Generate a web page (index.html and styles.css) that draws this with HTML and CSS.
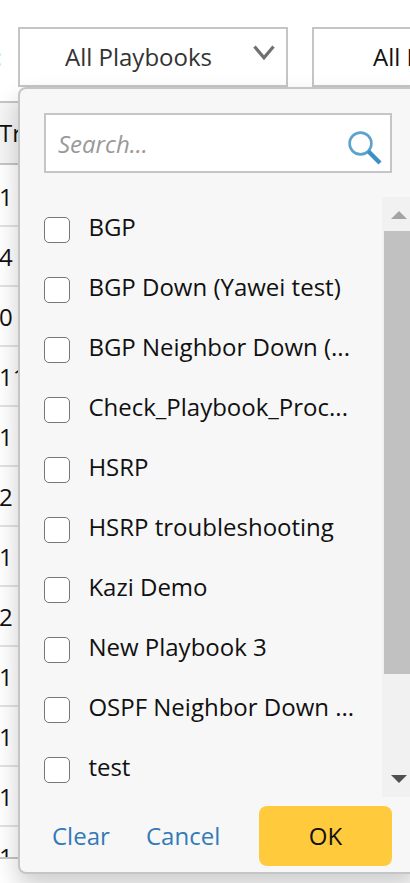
FILE: index.html
```html
<!DOCTYPE html>
<html lang="en">
<head>
<meta charset="utf-8">
<title>Playbooks</title>
<link rel="stylesheet" href="styles.css">
</head>
<body>
<div class="page">
  <header class="filters">
    <span class="label">:</span>
    <div class="select active"><span>All Playbooks</span>
      <svg class="chevron" width="22" height="18" viewBox="0 0 22 18"><path d="M1.5 1.5 11 12.8 20.5 1.5" fill="none" stroke="#707070" stroke-width="3.2"/></svg>
    </div>
    <div class="select next"><span>All Devices</span></div>
  </header>
  <main class="table">
    <div class="head">Tr</div>
    <div class="row first">1</div>
    <div class="row">4</div>
    <div class="row">0</div>
    <div class="row">11</div>
    <div class="row">1</div>
    <div class="row">2</div>
    <div class="row">1</div>
    <div class="row">2</div>
    <div class="row">1</div>
    <div class="row">1</div>
    <div class="row">1</div>
    <div class="row">1</div>
  </main>
  <section class="panel">
    <div class="search"><span>Search...</span>
      <svg width="34" height="34" viewBox="0 0 34 34"><circle cx="12.5" cy="12.5" r="10.9" fill="none" stroke="#5ba2cc" stroke-width="2.6"/><path d="M20.3 20.3 32 32" stroke="#3c90c3" stroke-width="4.4"/></svg>
    </div>
    <div class="list">
      <div class="options">
        <label class="option"><i class="box"></i><span>BGP</span></label>
        <label class="option"><i class="box"></i><span>BGP Down (Yawei test)</span></label>
        <label class="option"><i class="box"></i><span>BGP Neighbor Down (...</span></label>
        <label class="option"><i class="box"></i><span>Check_Playbook_Proc...</span></label>
        <label class="option"><i class="box"></i><span>HSRP</span></label>
        <label class="option"><i class="box"></i><span>HSRP troubleshooting</span></label>
        <label class="option"><i class="box"></i><span>Kazi Demo</span></label>
        <label class="option"><i class="box"></i><span>New Playbook 3</span></label>
        <label class="option"><i class="box"></i><span>OSPF Neighbor Down ...</span></label>
        <label class="option"><i class="box"></i><span>test</span></label>
      </div>
      <div class="scrollbar">
        <svg width="34" height="34" viewBox="0 0 34 34"><path d="M9 22 17 14 25 22Z" fill="#a3a3a3"/></svg>
        <div class="thumb"></div>
        <svg class="down" width="34" height="34" viewBox="0 0 34 34"><path d="M9 12 17 20 25 12Z" fill="#505050"/></svg>
      </div>
    </div>
    <footer class="actions">
      <a>Clear</a><a class="cancel">Cancel</a><button>OK</button>
    </footer>
  </section>
</div>
</body>
</html>
```
FILE: styles.css
```css
* { box-sizing: border-box; }
body { margin: 0; background: #fff; font-family: "Open Sans", sans-serif; font-size: 24px; color: #111; }
.page { position: relative; width: 410px; height: 883px; overflow: hidden; white-space: nowrap; }
.filters { display: flex; height: 101px; padding-top: 27px; }
.label { flex: none; width: 18px; line-height: 60px; color: #a6e8fc; text-indent: -4px; }
.select { flex: none; display: flex; justify-content: space-between; width: 270px; height: 60px; padding: 0 11px 0 45px; border: 2px solid #c5c5c5; line-height: 55px; color: #333; }
.next { margin-left: 24px; padding-left: 59px; color: #111; }
.chevron { margin-top: 16px; }
.table { height: 758px; overflow: hidden; border-top: 2px solid #c5c5c5; border-bottom: 2px solid #c5c5c5; text-indent: -1px; }
.head { height: 62px; line-height: 60px; background: #f5f5f5; border-bottom: 2px solid #c5c5c5; }
.row { height: 60px; line-height: 60px; border-bottom: 2px solid #e2e2e2; }
.first { height: 62px; line-height: 64px; }
.panel { position: absolute; left: 18px; top: 87px; width: 400px; height: 787px; padding: 24px 0 0; background: #f7f7f7; border: 2px solid #c5c5c5; border-radius: 8px; box-shadow: 0 12px 24px rgba(0, 0, 0, .2); }
.search { display: flex; justify-content: space-between; width: 348px; height: 60px; margin-left: 24px; padding: 0 8px 0 12px; border: 2px solid #c5c5c5; background: #fff; color: #999; font-style: italic; line-height: 57px; }
.search svg { margin-top: 16px; }
.list { display: flex; height: 600px; margin-top: 24px; }
.options { width: 362px; padding-left: 24px; }
.option { display: flex; height: 60px; line-height: 60px; }
.box { width: 26px; height: 26px; margin: 20px 18.4px 0 0; border: 1px solid #767676; border-radius: 5px; background: #fff; }
.scrollbar { width: 34px; display: flex; flex-direction: column; background: #f1f1f1; }
.thumb { width: 30px; height: 443px; margin-left: 2px; background: #c1c1c1; }
.down { margin-top: auto; }
.actions { display: flex; margin-top: 9px; line-height: 60px; color: #337ab7; }
.actions a { width: 94px; margin-left: 32px; }
.actions .cancel { width: 113px; margin-left: 0; }
button { width: 133px; height: 60px; padding: 0; border: 0; border-radius: 8px; background: #ffcb3d; font: inherit; color: #111; }
```
